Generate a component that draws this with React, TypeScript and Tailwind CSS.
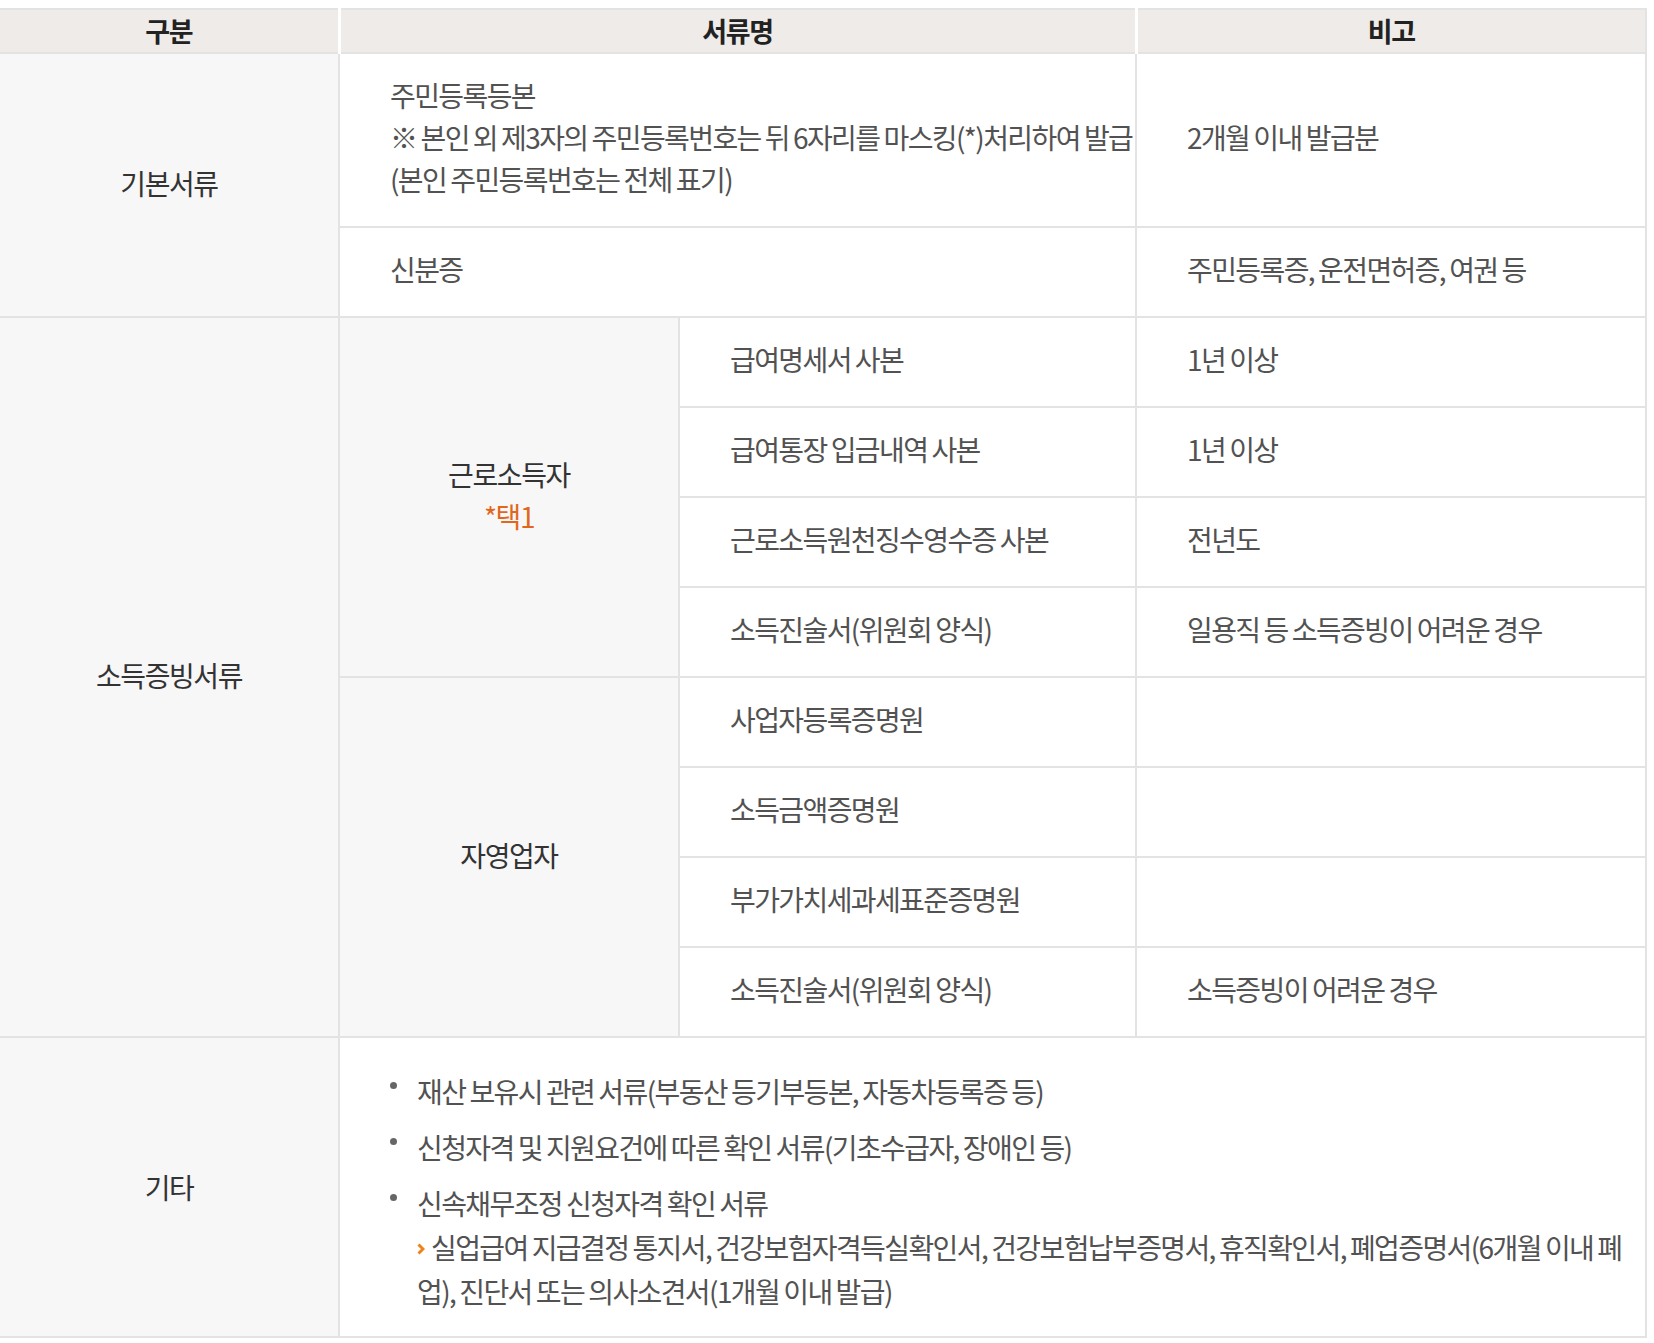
import React from 'react';

const font = { fontFamily: '"Noto Sans CJK KR", "Noto Sans", sans-serif' };

const th = 'h-[44px] bg-[#efebe8] border-y-2 border-y-[#e3e3e3] border-x-[3px] border-x-white text-center font-bold text-[27px] tracking-[-1.4px] text-[#222] leading-[42px] p-0';
const label = 'bg-[#f7f7f7] border-2 border-[#e3e3e3] text-center align-middle text-[28px] tracking-[-1.4px] text-[#333] leading-[42px] pt-0 pb-[4px] px-0';
const cell = 'border-2 border-[#e3e3e3] pl-[50px] pr-[6px] pt-[20px] pb-[26px] text-left align-middle text-[28px] tracking-[-1.6px] [word-spacing:-0.6px] text-[#525252] leading-[42px] whitespace-nowrap';

const incomeRows = [
  ['급여명세서 사본', '1년 이상'],
  ['급여통장 입금내역 사본', '1년 이상'],
  ['근로소득원천징수영수증 사본', '전년도'],
  ['소득진술서(위원회 양식)', '일용직 등 소득증빙이 어려운 경우'],
];

const selfRows = [
  ['사업자등록증명원', ''],
  ['소득금액증명원', ''],
  ['부가가치세과세표준증명원', ''],
  ['소득진술서(위원회 양식)', '소득증빙이 어려운 경우'],
];

const Bullet = ({ children }: { children: React.ReactNode }) => (
  <li className="flex items-start gap-[20px]">
    <span className="mt-[13px] w-[7px] h-[7px] rounded-full bg-[#666] shrink-0" />
    <div className="flex-1">{children}</div>
  </li>
);

export default function App() {
  return (
    <div className="bg-white min-h-screen pt-[8px]" style={font}>
      <table className="w-[1646px] border-collapse table-fixed">
        <colgroup>
          <col className="w-[339px]" />
          <col className="w-[340px]" />
          <col className="w-[457px]" />
          <col className="w-[510px]" />
        </colgroup>
        <thead>
          <tr>
            <th className={th + ' border-l-0'}>구분</th>
            <th className={th} colSpan={2}>서류명</th>
            <th className={th + ' border-r-2 border-r-[#e3e3e3]'}>비고</th>
          </tr>
        </thead>
        <tbody>
          {/* 기본서류 */}
          <tr>
            <td className={label + ' border-l-0'} rowSpan={2}>기본서류</td>
            <td className={cell} colSpan={2}>
              주민등록등본
              <br />※ 본인 외 제3자의 주민등록번호는 뒤 6자리를 마스킹(*)처리하여 발급
              <br />(본인 주민등록번호는 전체 표기)
            </td>
            <td className={cell}>2개월 이내 발급분</td>
          </tr>
          <tr>
            <td className={cell} colSpan={2}>신분증</td>
            <td className={cell}>주민등록증, 운전면허증, 여권 등</td>
          </tr>

          {/* 소득증빙서류 */}
          {incomeRows.map(([name, note], i) => (
            <tr key={'inc' + i}>
              {i === 0 && (
                <>
                  <td className={label + ' border-l-0'} rowSpan={8}>소득증빙서류</td>
                  <td className={label} rowSpan={4}>
                    근로소득자
                    <br />
                    <span className="text-[#e2661c]">*택1</span>
                  </td>
                </>
              )}
              <td className={cell}>{name}</td>
              <td className={cell}>{note}</td>
            </tr>
          ))}
          {selfRows.map(([name, note], i) => (
            <tr key={'self' + i}>
              {i === 0 && (
                <td className={label} rowSpan={4}>자영업자</td>
              )}
              <td className={cell}>{name}</td>
              <td className={cell}>{note}</td>
            </tr>
          ))}

          {/* 기타 */}
          <tr>
            <td className="bg-[#f7f7f7] border-2 border-l-0 border-[#e3e3e3] text-center align-middle text-[28px] tracking-[-1.4px] text-[#333] leading-[42px] p-0">기타</td>
            <td className="border-2 border-[#e3e3e3] pl-[50px] pr-[18px] pt-[31px] pb-[23px] align-middle text-[28px] tracking-[-1.6px] [word-spacing:-0.6px] text-[#525252] leading-[44px]" colSpan={3}>
              <ul className="flex flex-col gap-[12px]">
                <Bullet>재산 보유시 관련 서류(부동산 등기부등본, 자동차등록증 등)</Bullet>
                <Bullet>신청자격 및 지원요건에 따른 확인 서류(기초수급자, 장애인 등)</Bullet>
                <Bullet>
                  신속채무조정 신청자격 확인 서류
                  <br />
                  <svg className="inline-block align-middle mr-[6px] mb-[4px]" width="8" height="12" viewBox="0 0 8 12">
                    <path d="M1.5 1.5 L6 6 L1.5 10.5" fill="none" stroke="#f0821c" strokeWidth="3" />
                  </svg>
                  실업급여 지급결정 통지서, 건강보험자격득실확인서, 건강보험납부증명서, 휴직확인서, 폐업증명서(6개월 이내 폐업), 진단서 또는 의사소견서(1개월 이내 발급)
                </Bullet>
              </ul>
            </td>
          </tr>
        </tbody>
      </table>
    </div>
  );
}
